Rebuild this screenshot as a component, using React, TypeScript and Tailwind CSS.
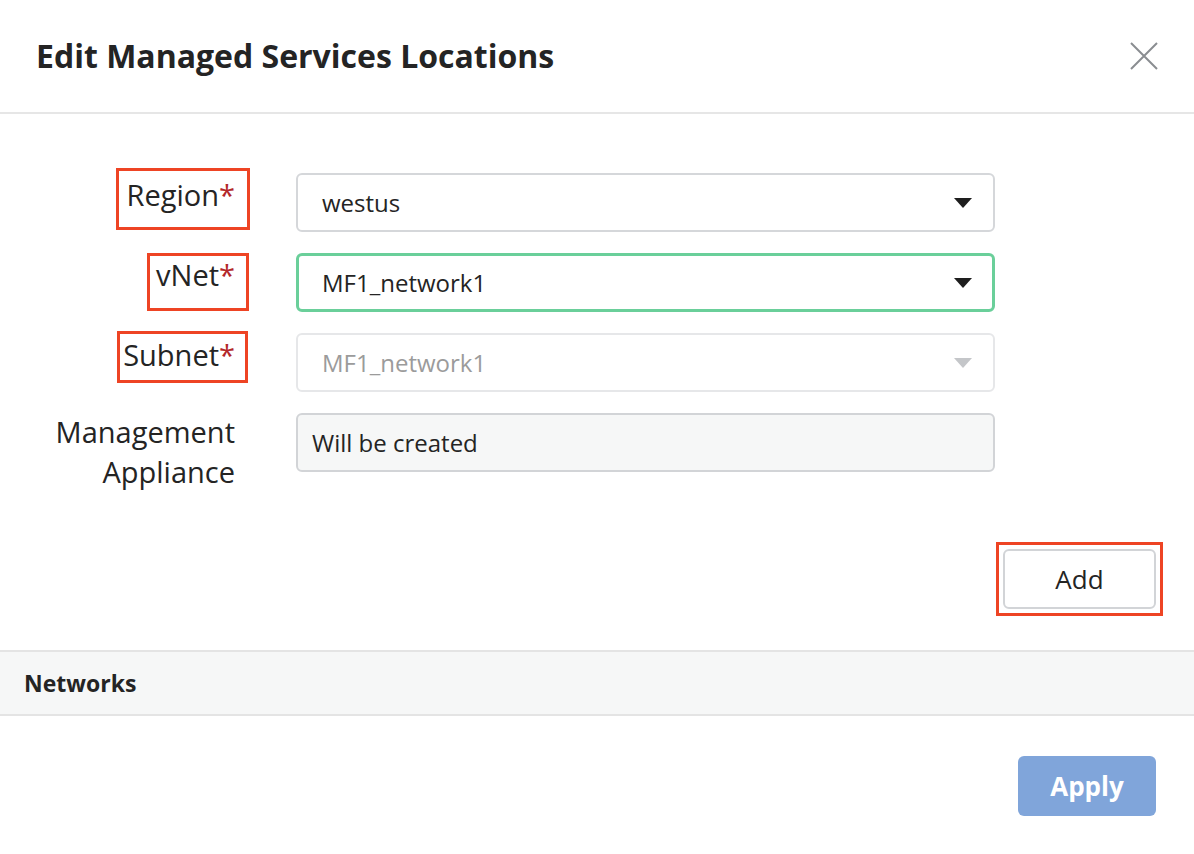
const Caret = ({ muted }: { muted?: boolean }) => (
  <svg width="20" height="12" viewBox="0 0 20 12" className={muted ? 'text-[#c4c6c9]' : 'text-[#1e1e1e]'}>
    <path d="M1 1h18L10 11z" fill="currentColor" />
  </svg>
);

const Label = ({ text, required, box }: { text: string; required?: boolean; box?: string }) => (
  <span className="relative inline-block">
    {box && <span className={`absolute border-[3px] border-[#ee4424] ${box}`} />}
    <span className="relative">
      {text}
      {required && <span className="text-[#b3272a]">*</span>}
    </span>
  </span>
);

export default function App() {
  return (
    <div className="w-[1194px] h-[854px] bg-white text-[#242424] font-['Open_Sans',sans-serif] flex flex-col">
      {/* header */}
      <div className="h-[114px] flex items-center justify-between pl-[36px] pr-[36px] border-b-2 border-[#e6e6e6]">
        <h1 className="text-[32px] font-bold">Edit Managed Services Locations</h1>
        <svg width="28" height="28" viewBox="0 0 28 28" className="text-[#8a8d91]">
          <path d="M1 1l26 26M27 1L1 27" stroke="currentColor" strokeWidth="2" />
        </svg>
      </div>

      {/* form */}
      <div className="pt-[59px] pr-[199px] flex flex-col gap-[21px]">
        <div className="grid grid-cols-[235px_1fr] gap-x-[61px] items-start">
          <div className="text-right text-[29px] font-medium leading-[38px] pt-[3px]">
            <Label text="Region" required box="-left-[11px] -right-[15px] -top-[8px] -bottom-[16px]" />
          </div>
          <div className="h-[59px] rounded-md border-2 border-[#d5d7da] flex items-center justify-between pl-[24px] pr-[20px] text-[24px]">
            <span>westus</span>
            <Caret />
          </div>
        </div>

        <div className="grid grid-cols-[235px_1fr] gap-x-[61px] items-start">
          <div className="text-right text-[29px] font-medium leading-[38px] pt-[3px]">
            <Label text="vNet" required box="-left-[9px] -right-[14px] -top-[3px] -bottom-[17px]" />
          </div>
          <div className="h-[59px] rounded-md border-[3px] border-[#6acf9a] flex items-center justify-between pl-[23px] pr-[19px] text-[24px]">
            <span>MF1_network1</span>
            <Caret />
          </div>
        </div>

        <div className="grid grid-cols-[235px_1fr] gap-x-[61px] items-start">
          <div className="text-right text-[29px] font-medium leading-[38px] pt-[3px]">
            <Label text="Subnet" required box="-left-[6px] -right-[13px] -top-[5px] -bottom-[9px]" />
          </div>
          <div className="h-[59px] rounded-md border-2 border-[#e6e7e9] flex items-center justify-between pl-[24px] pr-[20px] text-[24px] text-[#9b9b9b]">
            <span>MF1_network1</span>
            <Caret muted />
          </div>
        </div>

        <div className="grid grid-cols-[235px_1fr] gap-x-[61px] items-start">
          <div className="text-right text-[29px] font-medium leading-[40px] -mt-[1px]">
            Management
            <br />
            Appliance
          </div>
          <div className="h-[59px] rounded-md border-2 border-[#d2d4d7] bg-[#f6f7f7] flex items-center pl-[14px] text-[24px]">
            Will be created
          </div>
        </div>
      </div>

      {/* add */}
      <div className="flex justify-end pr-[31px] mt-[50px]">
        <div className="border-[3px] border-[#ee4424] p-[4px]">
          <button className="w-[153px] h-[60px] rounded-md border-2 border-[#d2d4d7] bg-white text-[26px] font-medium">
            Add
          </button>
        </div>
      </div>

      {/* networks */}
      <div className="mt-[34px] h-[66px] bg-[#f6f7f7] border-y-2 border-[#e4e4e4] flex items-center pl-[24px]">
        <span className="text-[23px] font-bold">Networks</span>
      </div>

      {/* footer */}
      <div className="flex justify-end pr-[38px] pt-[40px]">
        <button className="w-[138px] h-[60px] rounded-md bg-[#80a5da] text-white text-[26px] font-bold">
          Apply
        </button>
      </div>
    </div>
  );
}
